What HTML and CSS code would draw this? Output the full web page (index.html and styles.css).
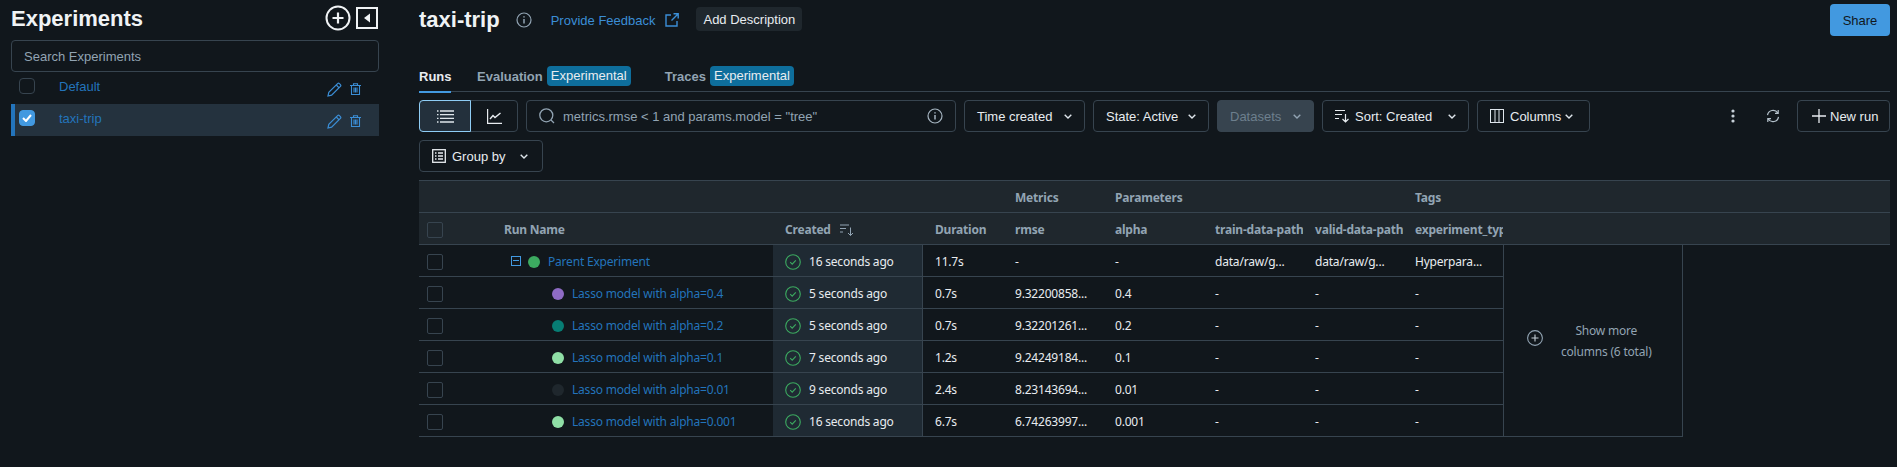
FILE: index.html
```html
<!DOCTYPE html>
<html lang="en">
<head>
  <meta charset="UTF-8" />
  <title>taxi-trip - MLflow</title>
  <link rel="stylesheet" href="styles.css">
</head>
<body>

<aside class="sidebar">
  <div class="side-head">
    <h1>Experiments</h1>
    <svg class="side-add" width="26" height="26" viewBox="0 0 26 26" fill="none" stroke="#f0f3f5" stroke-width="2"><circle cx="13" cy="13" r="11.5"/><path d="M13 7.5v11M7.5 13h11" stroke-width="2.2"/></svg>
    <svg class="side-collapse" width="22" height="22" viewBox="0 0 22 22"><rect x="1" y="1" width="20" height="20" fill="none" stroke="#f0f3f5" stroke-width="2"/><path d="M14 6.5v9L8 11z" fill="#f0f3f5"/></svg>
  </div>
  <div class="side-search">Search Experiments</div>
  <div class="exp-row">
    <span class="check"></span>
    <a class="exp-name">Default</a>
    <svg class="pencil" width="15" height="15" viewBox="0 0 15 15" fill="none" stroke="#3b8ed6" stroke-width="1.2"><path d="M1 14l.8-3.6L10.6 1.6a1.3 1.3 0 0 1 1.8 0l1 1a1.3 1.3 0 0 1 0 1.8L4.6 13.2z"/><path d="M9.3 3l2.8 2.8"/></svg>
    <svg class="trash" width="11" height="12" viewBox="0 0 11 12" fill="none" stroke="#3b8ed6" stroke-width="1.1"><path d="M0 2.5h11M3.5 2.5V.8h4v1.7M1.5 2.5v9h8v-9M4 4.5v5M5.5 4.5v5M7 4.5v5"/></svg>
  </div>
  <div class="exp-row exp-row-active">
    <span class="check check-on"><svg width="10" height="8" viewBox="0 0 10 8" fill="none" stroke="#fff" stroke-width="2"><path d="M1 4l3 3 5-6"/></svg></span>
    <a class="exp-name">taxi-trip</a>
    <svg class="pencil" width="15" height="15" viewBox="0 0 15 15" fill="none" stroke="#3b8ed6" stroke-width="1.2"><path d="M1 14l.8-3.6L10.6 1.6a1.3 1.3 0 0 1 1.8 0l1 1a1.3 1.3 0 0 1 0 1.8L4.6 13.2z"/><path d="M9.3 3l2.8 2.8"/></svg>
    <svg class="trash" width="11" height="12" viewBox="0 0 11 12" fill="none" stroke="#3b8ed6" stroke-width="1.1"><path d="M0 2.5h11M3.5 2.5V.8h4v1.7M1.5 2.5v9h8v-9M4 4.5v5M5.5 4.5v5M7 4.5v5"/></svg>
  </div>
</aside>

<main class="main">
  <div class="title-row">
    <h2>taxi-trip</h2>
    <svg class="title-info" width="16" height="16" viewBox="0 0 16 16" fill="none" stroke="#92a4b3" stroke-width="1.2"><circle cx="8" cy="8" r="7"/><path d="M8 7v4.5" stroke-width="1.5"/><path d="M8 4.2v1.4" stroke-width="1.5"/></svg>
    <a class="feedback">Provide Feedback</a>
    <svg class="ext-icon" width="14" height="14" viewBox="0 0 14 14" fill="none" stroke="#3b8ed6" stroke-width="1.4"><path d="M6 2H1v11h11V8M8.5 .8h4.7v4.7M13 1L6.5 7.5"/></svg>
    <button class="add-desc">Add Description</button>
    <button class="share">Share</button>
  </div>

  <div class="tabs">
    <span class="tab tab-on">Runs</span>
    <span class="tab tab-eval">Evaluation</span><span class="badge">Experimental</span>
    <span class="tab tab-traces">Traces</span><span class="badge">Experimental</span>
  </div>

  <div class="toolbar">
    <div class="toggle">
      <span class="toggle-btn toggle-on"><svg width="17" height="13" viewBox="0 0 17 13" stroke="#dfe6ec" stroke-width="1.3"><path d="M0 1h1.5M0 4.7h1.5M0 8.3h1.5M0 12h1.5M3 1h14M3 4.7h14M3 8.3h14M3 12h14"/></svg></span>
      <span class="toggle-btn"><svg width="15" height="15" viewBox="0 0 15 15" fill="none" stroke="#e8ecf0" stroke-width="1.2"><path d="M.6 0v14.4H15"/><path d="M3 10l3-3.5 2 2L13.5 4" stroke-width="1.4"/></svg></span>
    </div>
    <div class="search">
      <svg width="16" height="16" viewBox="0 0 16 16" fill="none" stroke="#92a4b3" stroke-width="1.3"><circle cx="7.3" cy="7.3" r="6.5"/><path d="M12 12l3 3"/></svg>
      <span class="search-text">metrics.rmse &lt; 1 and params.model = "tree"</span>
      <svg class="search-info" width="16" height="16" viewBox="0 0 16 16" fill="none" stroke="#a6b5c1" stroke-width="1.2"><circle cx="8" cy="8" r="7"/><path d="M8 7v4.5" stroke-width="1.5"/><path d="M8 4.2v1.4" stroke-width="1.5"/></svg>
    </div>
    <button class="ctl ctl-time">Time created <svg class="chev" width="8" height="5" viewBox="0 0 8 5"><path d="M.7.7L4 4l3.3-3.3"/></svg></button>
    <button class="ctl ctl-state">State: Active <svg class="chev" width="8" height="5" viewBox="0 0 8 5"><path d="M.7.7L4 4l3.3-3.3"/></svg></button>
    <button class="ctl ctl-data">Datasets <svg class="chev" width="8" height="5" viewBox="0 0 8 5"><path d="M.7.7L4 4l3.3-3.3"/></svg></button>
    <button class="ctl ctl-sort">
      <svg width="14" height="14" viewBox="0 0 14 14" fill="none" stroke="#e8ecf0" stroke-width="1.2"><path d="M0 1.5h10M0 5.5h7M0 9.5h4M10.5 5v8M7.5 10l3 3 3-3"/></svg>
      Sort: Created <svg class="chev" width="8" height="5" viewBox="0 0 8 5"><path d="M.7.7L4 4l3.3-3.3"/></svg>
    </button>
    <button class="ctl ctl-cols">
      <svg width="14" height="14" viewBox="0 0 14 14" fill="none" stroke="#dfe6ec" stroke-width="1"><rect x=".5" y=".5" width="13" height="13"/><path d="M5 .5v13M9 .5v13"/></svg>
      Columns <svg class="chev" width="8" height="5" viewBox="0 0 8 5"><path d="M.7.7L4 4l3.3-3.3"/></svg>
    </button>
    <div class="actions">
      <svg width="4" height="14" viewBox="0 0 4 14" fill="#c6d0d8"><circle cx="2" cy="2" r="1.6"/><circle cx="2" cy="7" r="1.6"/><circle cx="2" cy="12" r="1.6"/></svg>
      <svg class="refresh" width="14" height="14" viewBox="0 0 14 14" fill="none" stroke="#b3c0ca" stroke-width="1.2"><path d="M1.5 6.2A5.6 5.6 0 0 1 11.8 4M12.5 7.8A5.6 5.6 0 0 1 2.2 10M12.2 1v3.4H9M1.8 13V9.6H5"/></svg>
      <button class="ctl ctl-new"><svg width="14" height="14" viewBox="0 0 14 14" stroke="#e8ecf0" stroke-width="1.3"><path d="M7 0v14M0 7h14"/></svg> New run</button>
    </div>
  </div>

  <div class="toolbar">
    <button class="ctl ctl-group">
      <svg width="14" height="14" viewBox="0 0 14 14" fill="none" stroke="#e8ecf0" stroke-width="1.3"><rect x=".7" y=".7" width="12.6" height="12.6"/><path d="M3 4h1.5M6 4h5M3 7h1.5M6 7h5M3 10h1.5M6 10h5"/></svg>
      Group by <svg class="chev" width="8" height="5" viewBox="0 0 8 5"><path d="M.7.7L4 4l3.3-3.3"/></svg>
    </button>
  </div>

  <div class="runs">
    <div class="row row-group">
      <span></span><span></span><span></span><span></span>
      <span>Metrics</span><span>Parameters</span><span></span><span></span><span>Tags</span>
    </div>
    <div class="row row-cols">
      <span><i class="box"></i></span>
      <span>Run Name</span>
      <span class="cell-created">Created <svg width="14" height="12" viewBox="0 0 14 12" fill="none" stroke="#92a4b3" stroke-width="1"><path d="M0 1h9M0 4.5h6M0 8h3M10.5 3.5V11.5M8 9l2.5 2.5L13 9"/></svg></span>
      <span>Duration</span>
      <span>rmse</span><span>alpha</span><span>train-data-path</span><span>valid-data-path</span><span>experiment_type</span>
    </div>
    <div class="body">
      <div class="rows">
        <div class="row">
          <span><i class="box"></i></span>
          <span class="name"><i class="expander"></i><i class="dot dot-parent"></i><a>Parent Experiment</a></span>
          <span class="created"><svg class="ok" width="16" height="16" viewBox="0 0 16 16" fill="none" stroke="#3caa60" stroke-width="1.1"><circle cx="8" cy="8" r="7.3"/><path d="M5.2 8.2l2 2 3.6-3.8"/></svg>16 seconds ago</span>
          <span>11.7s</span><span>-</span><span>-</span><span>data/raw/g...</span><span>data/raw/g...</span><span>Hyperpara...</span>
        </div>
        <div class="row">
          <span><i class="box"></i></span>
          <span class="name name-child"><i class="dot dot-purple"></i><a>Lasso model with alpha=0.4</a></span>
          <span class="created"><svg class="ok" width="16" height="16" viewBox="0 0 16 16" fill="none" stroke="#3caa60" stroke-width="1.1"><circle cx="8" cy="8" r="7.3"/><path d="M5.2 8.2l2 2 3.6-3.8"/></svg>5 seconds ago</span>
          <span>0.7s</span><span>9.32200858...</span><span>0.4</span><span>-</span><span>-</span><span>-</span>
        </div>
        <div class="row">
          <span><i class="box"></i></span>
          <span class="name name-child"><i class="dot dot-teal"></i><a>Lasso model with alpha=0.2</a></span>
          <span class="created"><svg class="ok" width="16" height="16" viewBox="0 0 16 16" fill="none" stroke="#3caa60" stroke-width="1.1"><circle cx="8" cy="8" r="7.3"/><path d="M5.2 8.2l2 2 3.6-3.8"/></svg>5 seconds ago</span>
          <span>0.7s</span><span>9.32201261...</span><span>0.2</span><span>-</span><span>-</span><span>-</span>
        </div>
        <div class="row">
          <span><i class="box"></i></span>
          <span class="name name-child"><i class="dot dot-mint"></i><a>Lasso model with alpha=0.1</a></span>
          <span class="created"><svg class="ok" width="16" height="16" viewBox="0 0 16 16" fill="none" stroke="#3caa60" stroke-width="1.1"><circle cx="8" cy="8" r="7.3"/><path d="M5.2 8.2l2 2 3.6-3.8"/></svg>7 seconds ago</span>
          <span>1.2s</span><span>9.24249184...</span><span>0.1</span><span>-</span><span>-</span><span>-</span>
        </div>
        <div class="row">
          <span><i class="box"></i></span>
          <span class="name name-child"><i class="dot dot-dark"></i><a>Lasso model with alpha=0.01</a></span>
          <span class="created"><svg class="ok" width="16" height="16" viewBox="0 0 16 16" fill="none" stroke="#3caa60" stroke-width="1.1"><circle cx="8" cy="8" r="7.3"/><path d="M5.2 8.2l2 2 3.6-3.8"/></svg>9 seconds ago</span>
          <span>2.4s</span><span>8.23143694...</span><span>0.01</span><span>-</span><span>-</span><span>-</span>
        </div>
        <div class="row">
          <span><i class="box"></i></span>
          <span class="name name-child"><i class="dot dot-mint"></i><a>Lasso model with alpha=0.001</a></span>
          <span class="created"><svg class="ok" width="16" height="16" viewBox="0 0 16 16" fill="none" stroke="#3caa60" stroke-width="1.1"><circle cx="8" cy="8" r="7.3"/><path d="M5.2 8.2l2 2 3.6-3.8"/></svg>16 seconds ago</span>
          <span>6.7s</span><span>6.74263997...</span><span>0.001</span><span>-</span><span>-</span><span>-</span>
        </div>
      </div>
      <div class="show-more">
        <svg width="16" height="16" viewBox="0 0 16 16" fill="none" stroke="#92a4b3" stroke-width="1.1"><circle cx="8" cy="8" r="7.4"/><path d="M8 4.5v7M4.5 8h7" stroke="#c6d0d8"/></svg>
        <span>Show more<br>columns (6 total)</span>
      </div>
    </div>
  </div>
</main>

</body>
</html>
```

FILE: styles.css
```css
body {
  margin: 0;
  height: 467px;
  overflow: hidden;
  display: flex;
  background: #11171c;
  color: #e8ecf0;
  font-family: "Liberation Sans", Arial, sans-serif;
  font-size: 13px;
}
a { color: #2374bb; }
button { font-family: inherit; font-size: 13px; }
svg { flex: none; display: block; }

/* sidebar */
.sidebar {
  width: 368px;
  margin-left: 11px;
  margin-right: 40px;
  flex: none;
}
.side-head {
  height: 40px;
  display: flex;
  align-items: center;
}
.side-head h1 {
  margin: 0 auto 3px 0;
  font-size: 22px;
  font-weight: 700;
  color: #f0f3f5;
}
.side-add { margin: 0 5px 5px 0; }
.side-collapse { margin: 0 1px 5px 0; }
.side-search {
  height: 32px;
  box-sizing: border-box;
  border: 1px solid #37444f;
  border-radius: 4px;
  padding: 0 12px;
  line-height: 31px;
  color: #92a4b3;
}
.exp-row {
  height: 32px;
  box-sizing: border-box;
  display: flex;
  align-items: center;
  padding: 0 18px 0 8px;
}
.exp-row-active {
  background: #24323e;
  border-left: 4px solid #2374bb;
  padding-left: 4px;
}
.check {
  width: 16px;
  height: 16px;
  box-sizing: border-box;
  border: 1px solid #37444f;
  border-radius: 4px;
  display: flex;
  align-items: center;
  justify-content: center;
  margin-top: -4px;
}
.check-on { background: #4299e0; border-color: #4299e0; }
.exp-name { margin: -4px auto 0 24px; }
.pencil { margin-top: 2px; }
.trash { margin: 2px 0 0 8px; }

/* title */
.main { width: 1471px; flex: none; }
.title-row {
  height: 32px;
  margin-top: 4px;
  display: flex;
  align-items: center;
}
.title-row h2 {
  margin: 0;
  font-size: 22px;
  font-weight: 700;
  color: #f0f3f5;
}
.title-info { margin-left: 16px; }
.feedback { margin: 0 0 0 19px; color: #3b8ed6; }
.ext-icon { margin: 0 0 1px 10px; }
.add-desc {
  margin: 0 auto 2px 17px;
  height: 24px;
  padding: 0 7px;
  border: none;
  border-radius: 4px;
  background: #1f272d;
  color: #e8ecf0;
}
.share {
  width: 60px;
  height: 32px;
  border: none;
  border-radius: 4px;
  background: #4299e0;
  color: #11171c;
}

/* tabs */
.tabs {
  height: 56px;
  box-sizing: border-box;
  border-bottom: 1px solid #37444f;
  display: flex;
  align-items: flex-end;
  font-weight: 700;
}
.tab { color: #92a4b3; padding-bottom: 6px; height: 16px; line-height: 16px; }
.tab-on {
  color: #e8ecf0;
  width: 32px;
  box-shadow: 0 2px 0 #4299e0;
}
.tab-eval { margin-left: 26px; }
.tab-traces { margin-left: 34px; }
.badge {
  height: 20px;
  width: 84px;
  margin: 0 0 5px 4px;
  border-radius: 4px;
  background: #0e6e9c;
  color: #e8ecf0;
  font-weight: 400;
  line-height: 20px;
  text-align: center;
}

/* toolbar */
.toolbar {
  display: flex;
  gap: 8px;
  margin-top: 8px;
  height: 32px;
}
.toggle {
  width: 99px;
  display: flex;
  border: 1px solid #37444f;
  border-radius: 4px;
  box-sizing: border-box;
}
.toggle-btn {
  flex: 1;
  display: flex;
  align-items: center;
  justify-content: center;
}
.toggle-on {
  flex: none;
  width: 50px;
  margin: -1px 0 -1px -1px;
  border: 1px solid #8fcdf5;
  border-radius: 4px 0 0 4px;
  background: #23303c;
}
.search {
  width: 430px;
  box-sizing: border-box;
  border: 1px solid #37444f;
  border-radius: 4px;
  display: flex;
  align-items: center;
  padding: 0 12px;
  color: #92a4b3;
}
.search-text { margin-left: 8px; }
.search-info { margin-left: auto; }
.ctl {
  height: 32px;
  box-sizing: border-box;
  border: 1px solid #37444f;
  border-radius: 4px;
  background: none;
  color: #e8ecf0;
  display: flex;
  align-items: center;
  padding: 0 12px;
  gap: 6px;
  white-space: nowrap;
}
.chev { fill: none; stroke: #dfe6ec; stroke-width: 1.4; margin-left: auto; }
.ctl-time { width: 121px; }
.ctl-state { width: 116px; }
.ctl-data { width: 97px; background: #37444f; color: #6d7f8d; }
.ctl-data .chev { stroke: #92a4b3; }
.ctl-sort { width: 147px; }
.ctl-cols { width: 113px; padding-right: 8px; }
.ctl-cols .chev { margin-left: -2px; }
.ctl-new { width: 93px; gap: 4px; padding-left: 14px; margin-left: 17px; }
.ctl-group { width: 124px; padding-right: 14px; }
.actions {
  margin-left: auto;
  display: flex;
  align-items: center;
}
.refresh { margin-left: 31px; }

/* runs table */
.runs {
  margin-top: 8px;
  font-family: "Noto Sans", sans-serif;
  font-size: 12px;
  letter-spacing: -0.2px;
}
.row {
  display: grid;
  grid-template-columns: 85px 269px 150px 80px 100px 100px 100px 100px 100px;
  width: 1084px;
  height: 32px;
  box-sizing: border-box;
  border-bottom: 1px solid #37444f;
  align-items: center;
}
.row > span { padding: 2px 0 0 12px; white-space: nowrap; overflow: hidden; }
.row > span:first-child { padding-left: 8px; }
.row > span:nth-child(2) { padding-left: 0; }
.row-group, .row-cols {
  width: 100%;
  background: #1f272d;
  color: #92a4b3;
  font-weight: 700;
}
.row-group { height: 33px; border-top: 1px solid #37444f; }
.cell-created {
  display: flex;
  align-items: center;
  gap: 9px;
}
.box {
  display: block;
  width: 16px;
  height: 16px;
  box-sizing: border-box;
  border: 1px solid #37444f;
  border-radius: 2px;
}
.body { display: flex; }
.name {
  display: flex;
  align-items: center;
  overflow: visible;
}
.name a { margin-left: 8px; }
.name-child .dot { margin-left: 48px; }
.expander {
  display: block;
  width: 10px;
  height: 10px;
  box-sizing: border-box;
  margin: -2px 0 0 7px;
  border: 1px solid #4299e0;
  background: linear-gradient(#4299e0, #4299e0) center / 6px 1px no-repeat;
}
.dot {
  display: block;
  width: 12px;
  height: 12px;
  border-radius: 50%;
  flex: none;
}
.expander + .dot { margin-left: 7px; }
.dot-parent { background: #3caa60; }
.dot-purple { background: #8e6bc4; }
.dot-teal { background: #077d74; }
.dot-mint { background: #8fdfa6; }
.dot-dark { background: #1f272d; }
.created {
  display: flex;
  align-items: center;
  gap: 8px;
  height: 100%;
  box-sizing: border-box;
  background: #1f2a33;
  border-right: 1px solid #37444f;
}
.show-more {
  width: 180px;
  height: 192px;
  box-sizing: border-box;
  border: 1px solid #37444f;
  border-top: none;
  display: flex;
  align-items: flex-start;
  gap: 18px;
  padding: 75px 0 0 23px;
  color: #92a4b3;
  line-height: 21px;
  text-align: center;
}
.show-more svg { margin-top: 10px; }
```
